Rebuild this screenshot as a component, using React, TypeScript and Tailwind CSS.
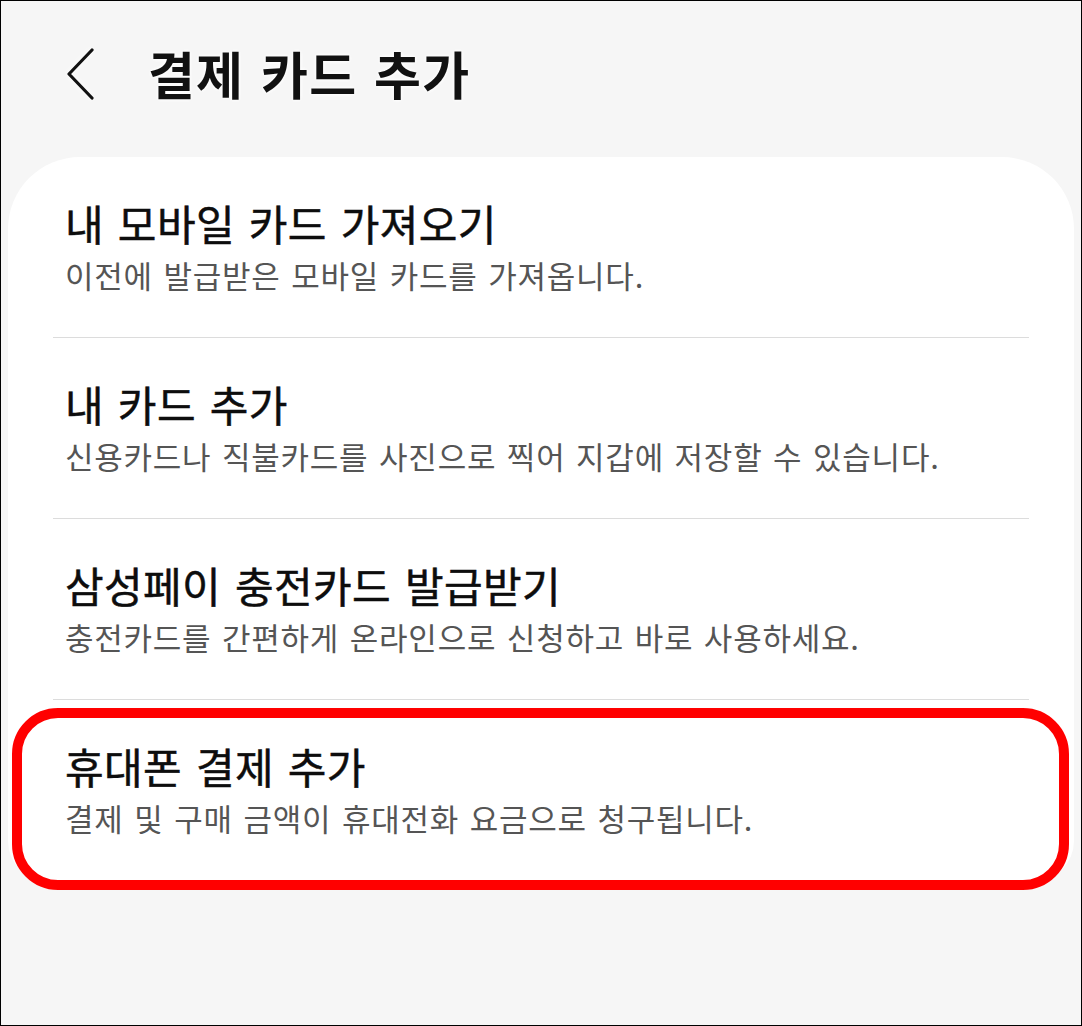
import React from "react";

type Item = { title: string; desc: string };

const items: Item[] = [
  { title: "내 모바일 카드 가져오기", desc: "이전에 발급받은 모바일 카드를 가져옵니다." },
  { title: "내 카드 추가", desc: "신용카드나 직불카드를 사진으로 찍어 지갑에 저장할 수 있습니다." },
  { title: "삼성페이 충전카드 발급받기", desc: "충전카드를 간편하게 온라인으로 신청하고 바로 사용하세요." },
  { title: "휴대폰 결제 추가", desc: "결제 및 구매 금액이 휴대전화 요금으로 청구됩니다." },
];

function BackIcon() {
  return (
    <svg width="30" height="52" viewBox="0 0 30 52" fill="none" className="[filter:drop-shadow(0_0_3px_#fff)]">
      <polyline
        points="26,2 3,26 26,50"
        stroke="#111"
        strokeWidth="3.2"
        strokeLinecap="round"
        strokeLinejoin="round"
      />
    </svg>
  );
}

export default function App() {
  return (
    <div className="relative w-[1082px] h-[1026px] overflow-hidden border border-black bg-[#f6f6f6] font-['Noto_Sans_CJK_KR',sans-serif]">
      {/* Header */}
      <div className="h-[156px] flex items-start pt-[47px] pl-[65px]">
        <BackIcon />
        <h1 className="ml-[52px] -mt-[6px] text-[51px] leading-[62px] font-bold text-[#111] tracking-[1.2px] [word-spacing:4px] [text-shadow:0_0_4px_#fff,0_0_4px_#fff]">
          결제 카드 추가
        </h1>
      </div>

      {/* Card */}
      <div className="mx-[7px] bg-white rounded-t-[72px] rounded-b-[40px] px-[45px]">
        {items.map((it, i) => (
          <div
            key={it.title}
            className={[
              "h-[181px] pl-[12px] pt-[41px]",
              i < items.length - 1 ? "border-b border-[#dcdcdc]" : "",
            ].join(" ")}
          >
            <div className="text-[42px] leading-[50px] font-normal text-[#0d0d0d] tracking-[0.4px] [word-spacing:4px] [-webkit-text-stroke:0.5px_#0d0d0d]">
              {it.title}
            </div>
            <div className="mt-[8px] text-[31px] leading-[38px] text-[#555] tracking-[0.75px] [word-spacing:3px]">
              {it.desc}
            </div>
          </div>
        ))}
      </div>

      {/* Highlight annotation */}
      <div className="absolute left-[11px] top-[707px] w-[1057px] h-[182px] rounded-[46px] border-[10px] border-[#ff0000]" />
    </div>
  );
}
